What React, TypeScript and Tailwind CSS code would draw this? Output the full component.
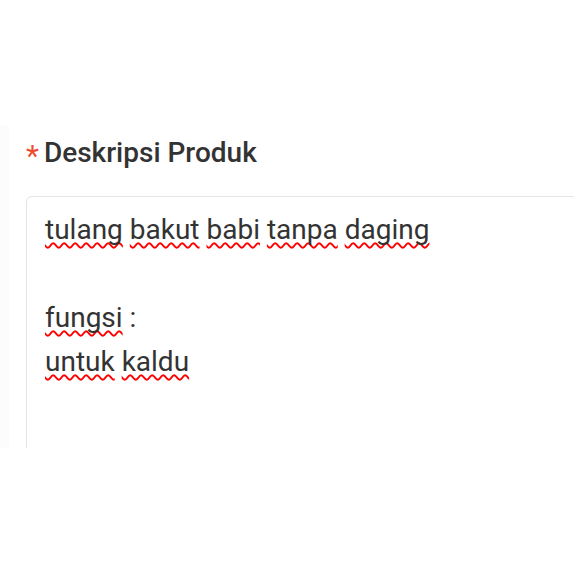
import React from "react";

const squiggle =
  "underline decoration-wavy decoration-[#ff0000] decoration-[2px] underline-offset-[3px] [text-decoration-skip-ink:none]";

function W({ children }: { children: React.ReactNode }) {
  return <span className={squiggle}>{children}</span>;
}

export default function App() {
  return (
    <div className="w-[574px] h-[574px] overflow-hidden bg-white font-['Roboto',_'Liberation_Sans',_sans-serif]">
      <div className="mt-[125px] h-[323px] flex overflow-hidden">
        <div className="w-[9px] shrink-0 bg-[#fcfcfc]" />
        <div className="flex-1 pl-[17px] pt-[12px]">
          <div className="flex items-center h-[32px] mb-[27px]">
            <span className="text-[#ee4d2d] text-[30px] leading-[32px] mr-[5px] mt-[6px]">*</span>
            <h2 className="text-[28px] leading-[32px] font-medium text-[#333333]">Deskripsi Produk</h2>
          </div>
          <div className="w-[600px] h-[400px] border border-[#e5e5e5] rounded-[6px] pl-[18px] pt-[11px] text-[28px] leading-[44px] text-[#333333]">
            <div>
              <W>tulang</W> <W>bakut</W> <W>babi</W> <W>tanpa</W> <W>daging</W>
            </div>
            <div>&nbsp;</div>
            <div>
              <W>fungsi</W> :
            </div>
            <div>
              <W>untuk</W> <W>kaldu</W>
            </div>
          </div>
        </div>
      </div>
    </div>
  );
}
